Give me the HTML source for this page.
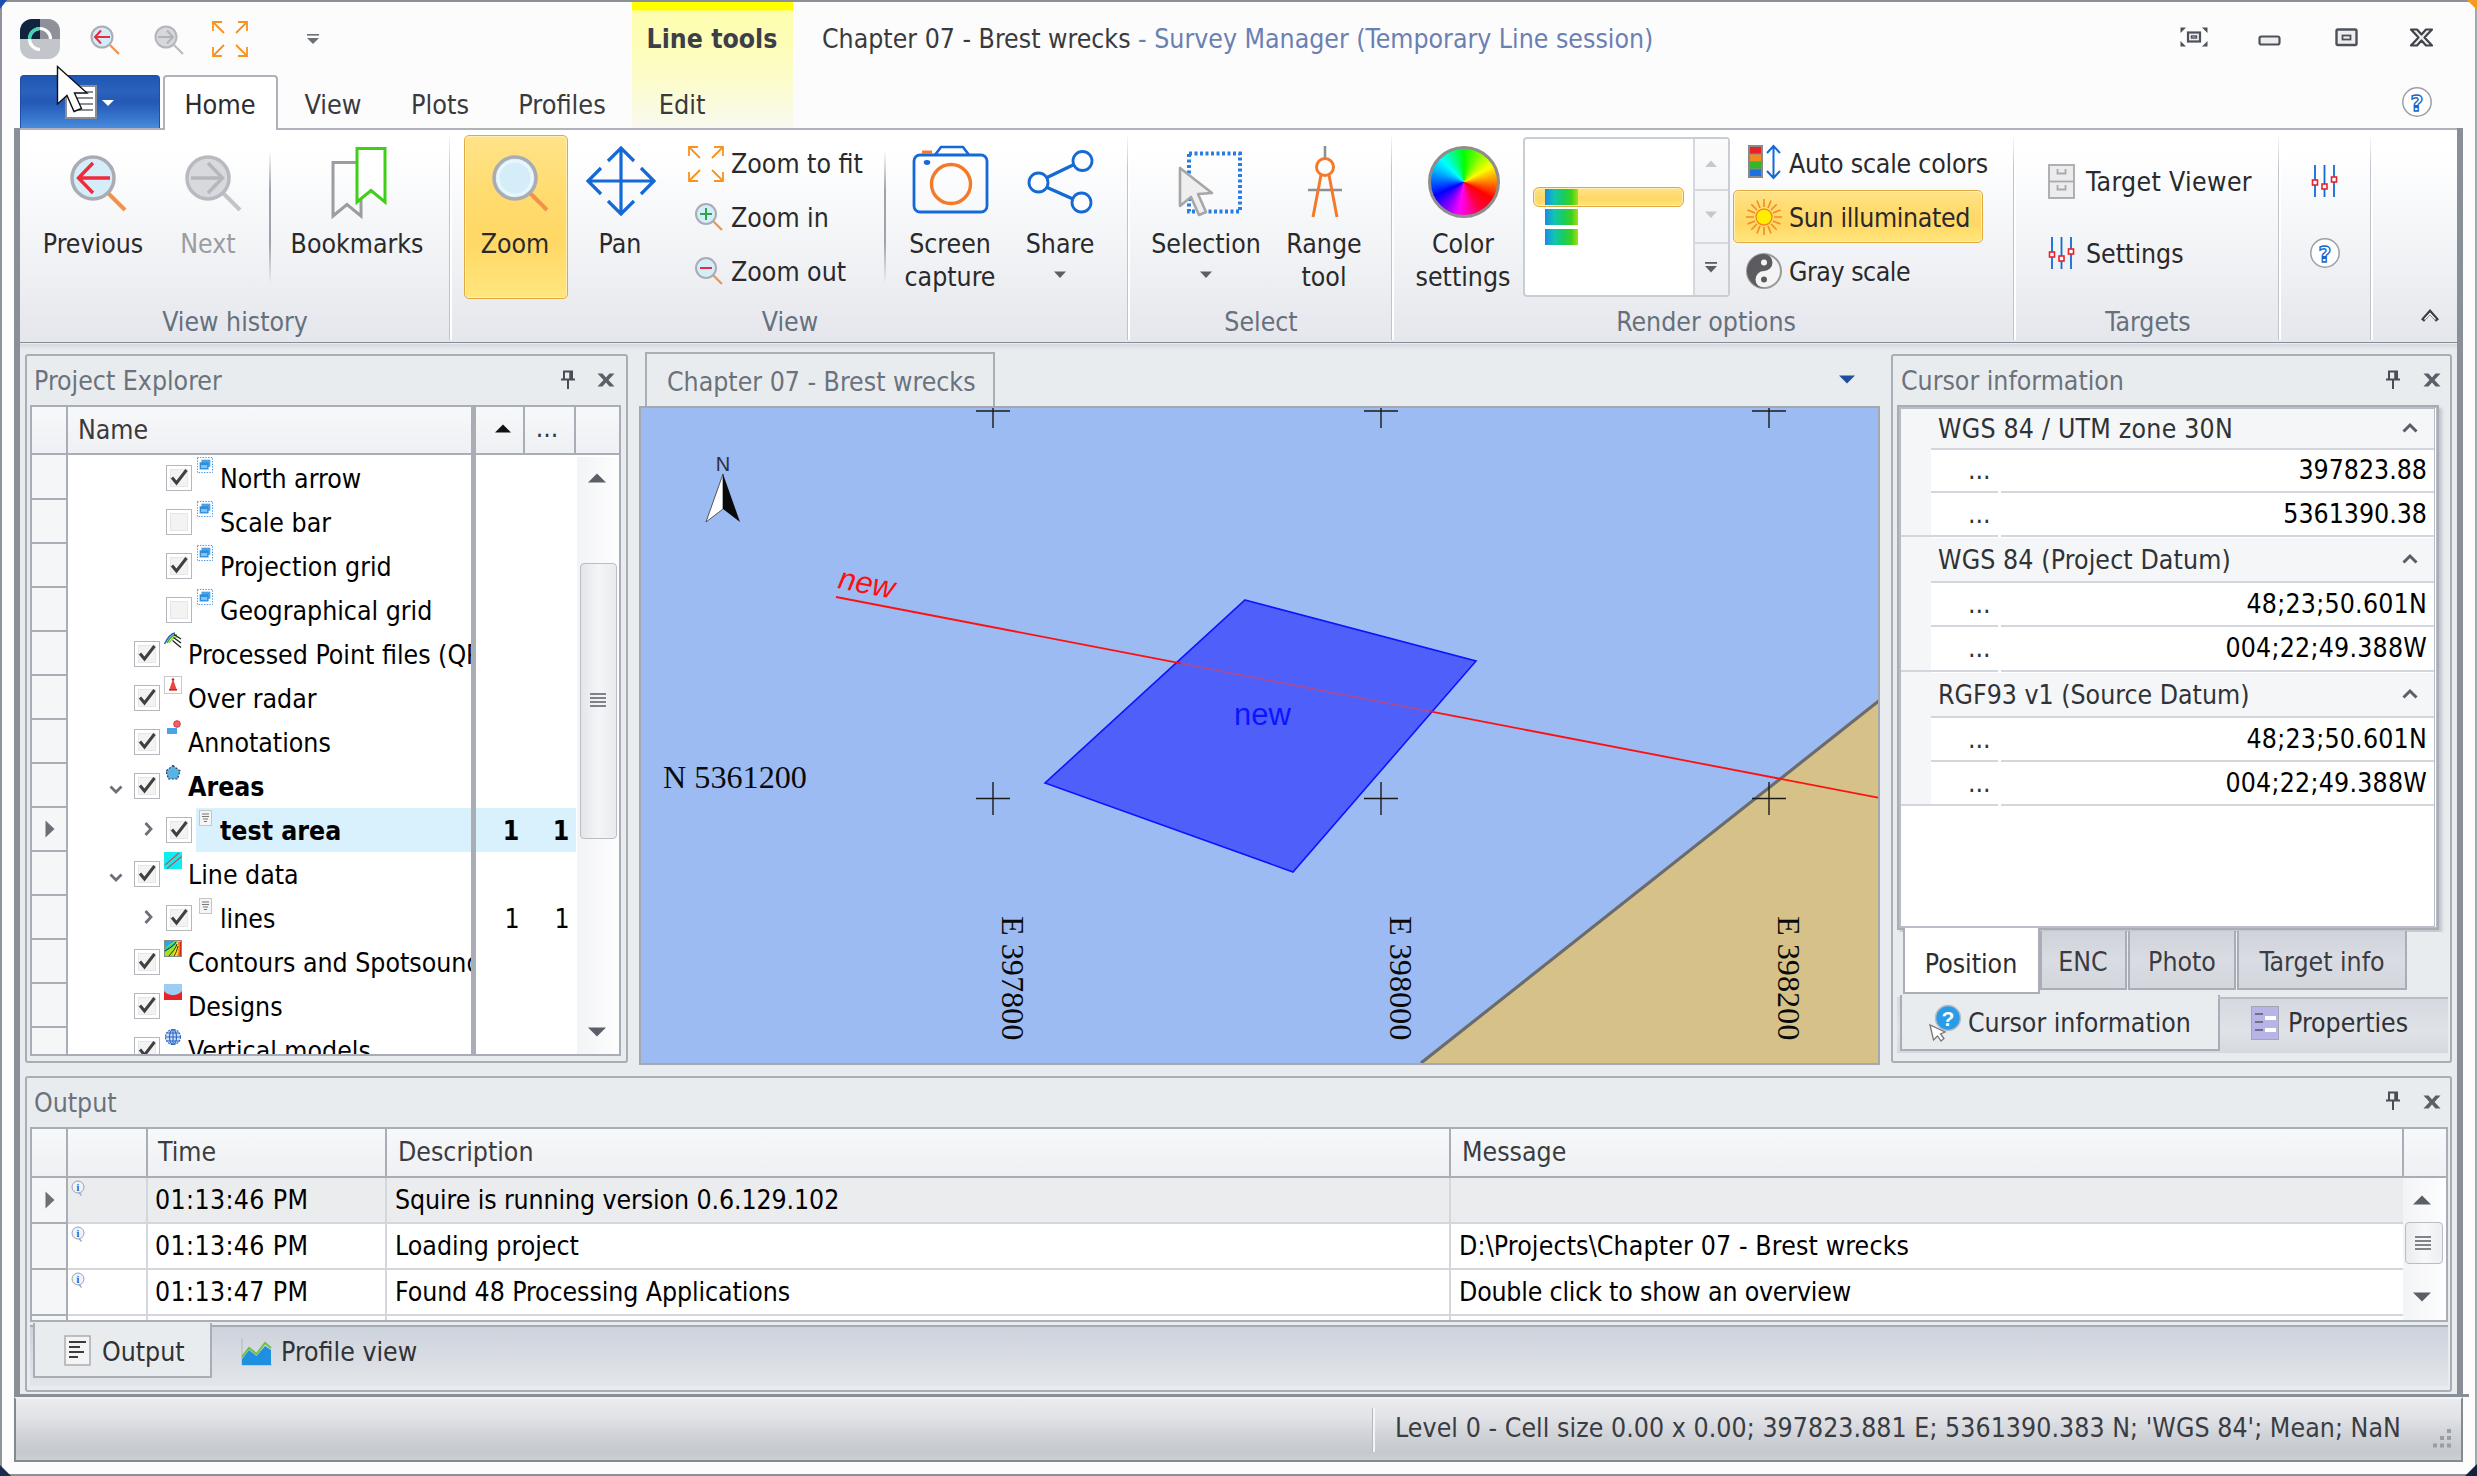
<!DOCTYPE html>
<html><head><meta charset="utf-8"><title>Survey Manager</title>
<style>
*{box-sizing:border-box;margin:0;padding:0}
html,body{width:2477px;height:1476px;overflow:hidden;background:#f8f9fb}
body{font-family:"DejaVu Sans Condensed","Liberation Sans",sans-serif;font-size:26.45px;color:#29292b;position:relative;letter-spacing:0px}
.a{position:absolute}
.t{position:absolute;white-space:nowrap;line-height:32px;height:32px;margin-top:1px}
.c{transform:translateX(-50%);text-align:center}
.r{transform:translateX(-100%);text-align:right}
.g{color:#66707c}
svg{position:absolute;overflow:visible}
.cb{position:absolute;width:26px;height:26px;border:1.5px solid #b4b8be;background:#f3f3f3;box-shadow:inset 0 0 0 3px #fff, inset 0 0 0 4px #e6e6e6}
.hl{background:linear-gradient(#ffe389,#ffdc70 35%,#ffd865 65%,#ffe67e 100%);border:1.5px solid #e2a83c;border-radius:5px;box-shadow:inset 0 0 0 1px #fff0b8}
.sep{position:absolute;width:2px;background:linear-gradient(rgba(150,155,165,0),#9fa3ab 30%,#9fa3ab 70%,rgba(150,155,165,0))}
.gsep{position:absolute;width:3px;top:132px;height:208px;background:linear-gradient(90deg,#bfc3cb 0 1.5px,#fff 1.5px 3px);-webkit-mask-image:linear-gradient(transparent,#000 18%,#000 100%);mask-image:linear-gradient(transparent,#000 18%,#000 100%)}
</style></head><body>
<!-- window frame -->
<div class="a" style="left:0;top:0;width:2477px;height:1476px;background:#fcfcfd"></div>
<div class="a" style="left:0;top:0;width:2477px;height:2px;background:#8c9198"></div>
<div class="a" style="left:0;top:0;width:2px;height:1476px;background:#8f949c"></div>
<div class="a" style="left:2475px;top:0;width:2px;height:1476px;background:#a3a8b0"></div>
<!-- TITLE BAR -->
<div class="a" style="left:632px;top:2px;width:161px;height:126px;background:linear-gradient(#ffff00 0,#ffff00 8px,#fefeae 9px,#fdfdba 45px,#fcfcd0 85px,#fafae6 112px,#f9f9f0 126px)"></div>
<div class="t c" style="left:712px;top:22px;font-weight:bold;color:#3c3f4a;font-size:26.4px">Line tools</div>
<div class="t" style="left:822px;top:22px;color:#3a3a3c">Chapter 07 - Brest wrecks<span style="color:#6a80b2"> - Survey Manager (Temporary Line session)</span></div>
<!-- app icon -->
<svg style="left:20px;top:19px" width="40" height="40" viewBox="0 0 40 40">
<defs><clipPath id="ai"><rect x="0" y="0" width="40" height="40" rx="12"/></clipPath></defs>
<g clip-path="url(#ai)"><rect width="40" height="40" fill="#c2c5ca"/><rect width="20" height="20" fill="#10243f"/><rect x="20" width="20" height="20" fill="#8e9197"/></g>
<path d="M20 9.500000000000002A10.5 10.5 0 1 0 20 30.5" fill="none" stroke="#fff" stroke-width="3.2"/>
<path d="M20 9.5A10.5 10.5 0 0 1 30.5 20" fill="none" stroke="#fff" stroke-width="3.2"/>
<path d="M9.5 20A10.5 10.5 0 0 1 20 9.5" fill="none" stroke="#3fd6b0" stroke-width="3.2"/>
</svg>
<!-- zoom back -->
<svg style="left:86px;top:21px" width="36" height="36" viewBox="0 0 36 36">
<line x1="24" y1="24" x2="33" y2="33" stroke="#f0914a" stroke-width="2.2"/>
<circle cx="16" cy="16" r="10.5" fill="#d2ecf9" stroke="#a9adb3" stroke-width="2"/>
<path d="M24 16H9M15 9.500000000000002L9 16L15 22.5" fill="none" stroke="#ee2b3b" stroke-width="2"/>
</svg>
<!-- zoom fwd disabled -->
<svg style="left:150px;top:21px" width="36" height="36" viewBox="0 0 36 36">
<line x1="24" y1="24" x2="33" y2="33" stroke="#b9bcc1" stroke-width="2.2"/>
<circle cx="16" cy="16" r="10.5" fill="#d6d8db" stroke="#b3b6bb" stroke-width="2"/>
<path d="M8 16H23M17 9.500000000000002L23 16L17 22.5" fill="none" stroke="#b0b3b8" stroke-width="2"/>
</svg>
<!-- zoom to fit -->
<svg style="left:212px;top:21px" width="36" height="36" viewBox="0 0 36 36" fill="none" stroke="#f7931e" stroke-width="1.8">
<path d="M12 12L1 1M1 10V1H10M24 12L35 1M26 1H35V10M12 24L1 35M1 26V35H10M24 24L35 35M26 35H35V26"/>
</svg>
<!-- qat dropdown -->
<svg style="left:306px;top:34px" width="14" height="12" viewBox="0 0 14 12"><rect x="1" y="0" width="12" height="1.6" fill="#6b6f77"/><path d="M1 4H13L7 10Z" fill="#6b6f77"/></svg>
<!-- window buttons -->
<svg style="left:2180px;top:27px" width="28" height="20" viewBox="0 0 28 20">
<path d="M0.5 0.5H6L0.5 6ZM27.5 0.5H22L27.5 6ZM0.5 19.500000000000004H6L0.5 14ZM27.5 19.500000000000004H22L27.5 14Z" fill="#4d515a"/>
<rect x="8" y="5.500000000000001" width="12" height="9" fill="#eeeef0" stroke="#4d515a" stroke-width="2.2"/><rect x="11.5" y="9" width="5" height="2" fill="none" stroke="#4d515a" stroke-width="1.4"/></svg>
<svg style="left:2258px;top:35px" width="24" height="12" viewBox="0 0 24 12"><rect x="1.5" y="1.5" width="20" height="8" rx="2" fill="#eeeef0" stroke="#4d515a" stroke-width="2.2"/></svg>
<svg style="left:2335px;top:28px" width="24" height="20" viewBox="0 0 24 20" fill="none" stroke="#4d515a"><rect x="1.5" y="1.5" width="20" height="15.500000000000002" rx="1.5" stroke-width="2.4" fill="#eeeef0"/><rect x="7.5" y="7.5" width="8" height="4" stroke-width="1.8"/></svg>
<svg style="left:2409px;top:28px" width="26" height="20" viewBox="0 0 26 20"><path d="M2 1.5H8L12.5 6.5L17 1.5H23L15.500000000000002 9.5L23 17.5H17L12.5 12.5L8 17.5H2L9.500000000000002 9.5Z" fill="#eeeef0" stroke="#3f434b" stroke-width="2.2" stroke-linejoin="round"/></svg>
<!-- TAB ROW -->
<div class="a" style="left:20px;top:75px;width:140px;height:53px;border-radius:4px 4px 0 0;background:linear-gradient(#1e56b3 0,#2a62bd 30%,#2458b6 50%,#3a7ad0 85%,#4a8cdc 100%);border:1.5px solid #1c4fa8;border-bottom:none"></div>
<svg style="left:64px;top:84px" width="52" height="36" viewBox="0 0 52 36">
<rect x="2" y="2" width="30" height="32" fill="#fff" stroke="#8a8d92" stroke-width="2"/>
<path d="M13 8H29M13 14H29M13 20H29M13 26H29" stroke="#8a8d92" stroke-width="2.2"/><rect x="4" y="4" width="6" height="28" fill="#fff"/>
<path d="M38 16H50L44 22Z" fill="#fff"/></svg>
<div class="a" style="left:163px;top:75px;width:115px;height:55px;border:2px solid #aeb3bb;border-bottom:none;border-radius:4px 4px 0 0;background:#fff"></div>
<div class="t c" style="left:220px;top:88px;color:#2c2c2e;font-size:26.8px">Home</div>
<div class="t c" style="left:333px;top:88px;color:#3a3a3c;font-size:26.8px">View</div>
<div class="t c" style="left:440px;top:88px;color:#3a3a3c;font-size:26.8px">Plots</div>
<div class="t c" style="left:562px;top:88px;color:#3a3a3c;font-size:26.8px">Profiles</div>
<div class="t c" style="left:682px;top:88px;color:#3a3a3c;font-size:26.8px">Edit</div>
<svg style="left:2401px;top:86px" width="32" height="32" viewBox="0 0 32 32"><circle cx="16" cy="16" r="14.2" fill="#fff" stroke="#9b9fa6" stroke-width="1.5"/><text x="16" y="24.5" text-anchor="middle" font-family="DejaVu Sans,Liberation Sans,sans-serif" font-size="22" font-weight="bold" fill="#fff" stroke="#1c64c8" stroke-width="1.4">?</text></svg>
<!-- RIBBON -->
<div class="a" style="left:14px;top:128px;width:2449px;height:216px;background:#8a8f97"></div>
<div class="a" style="left:20px;top:128px;width:2437px;height:216px;background:linear-gradient(#ffffff 0,#ffffff 10%,#f7f8fa 38%,#eef0f3 68%,#e7e9ee 90%,#e5e7ec 100%);border-top:2px solid #aeb3bb;border-bottom:2px solid #878d96"></div>
<div class="a" style="left:165px;top:128px;width:111px;height:3px;background:#fff"></div>
<div class="gsep" style="left:449px"></div><div class="gsep" style="left:1127px"></div><div class="gsep" style="left:1391px"></div><div class="gsep" style="left:2013px"></div><div class="gsep" style="left:2278px"></div><div class="gsep" style="left:2370px"></div>
<div class="t c g" style="left:235px;top:305px">View history</div>
<div class="t c g" style="left:790px;top:305px">View</div>
<div class="t c g" style="left:1261px;top:305px">Select</div>
<div class="t c g" style="left:1706px;top:305px">Render options</div>
<div class="t c g" style="left:2148px;top:305px">Targets</div>
<!-- Previous -->
<svg style="left:63px;top:148px" width="70" height="70" viewBox="0 0 70 70">
<line x1="45" y1="45" x2="62" y2="62" stroke="#f2924c" stroke-width="4"/>
<circle cx="30" cy="30" r="21" fill="#d4edf9" stroke="#a9adb3" stroke-width="3.5"/>
<path d="M47 30H16M30 15L15.500000000000002 30L30 45" fill="none" stroke="#ee2b3b" stroke-width="3.4"/>
</svg>
<div class="t c" style="left:93px;top:227px">Previous</div>
<!-- Next -->
<svg style="left:178px;top:148px" width="70" height="70" viewBox="0 0 70 70">
<line x1="45" y1="45" x2="62" y2="62" stroke="#c1c4c9" stroke-width="4"/>
<circle cx="30" cy="30" r="21" fill="#d7d9dc" stroke="#b7babf" stroke-width="3.5"/>
<path d="M13 30H44M30 15L44.5 30L30 45" fill="none" stroke="#b4b7bc" stroke-width="3.4"/>
</svg>
<div class="t c" style="left:208px;top:227px;color:#9b9da1">Next</div>
<div class="sep" style="left:269px;top:150px;height:134px"></div>
<!-- Bookmarks -->
<svg style="left:330px;top:146px" width="60" height="74" viewBox="0 0 60 74" fill="none">
<path d="M3 16.5H31V70L17 58.5L3 70Z" stroke="#9a9da2" stroke-width="3"/>
<path d="M27 2.5H55V56L41 44.5L27 56Z" fill="#fff" stroke="#3fcf19" stroke-width="3"/>
</svg>
<div class="t c" style="left:357px;top:227px">Bookmarks</div>
<!-- Zoom -->
<div class="a hl" style="left:464px;top:135px;width:104px;height:164px"></div>
<svg style="left:485px;top:148px" width="70" height="70" viewBox="0 0 70 70">
<line x1="45" y1="45" x2="62" y2="62" stroke="#f2924c" stroke-width="4"/>
<circle cx="30" cy="30" r="21" fill="#d4edf9" stroke="#a9adb3" stroke-width="3.5"/>
<circle cx="30" cy="30" r="17" fill="none" stroke="#e9f6fc" stroke-width="3"/>
</svg>
<div class="t c" style="left:515px;top:227px">Zoom</div>
<!-- Pan -->
<svg style="left:586px;top:146px" width="70" height="70" viewBox="0 0 70 70" fill="none" stroke="#1469d6" stroke-width="3.2">
<path d="M35 2V68M2 35H68M22 15L35 2L48 15M22 55L35 68L48 55M15 22L2 35L15 48M55 22L68 35L55 48"/>
</svg>
<div class="t c" style="left:620px;top:227px">Pan</div>
<!-- small zoom buttons -->
<svg style="left:688px;top:146px" width="36" height="36" viewBox="0 0 36 36" fill="none" stroke="#f7931e" stroke-width="1.8">
<path d="M12 12L1 1M1 10V1H10M24 12L35 1M26 1H35V10M12 24L1 35M1 26V35H10M24 24L35 35M26 35H35V26"/></svg>
<div class="t" style="left:731px;top:147px">Zoom to fit</div>
<svg style="left:694px;top:202px" width="30" height="30" viewBox="0 0 30 30">
<line x1="19" y1="19" x2="28" y2="28" stroke="#f2924c" stroke-width="2.2"/>
<circle cx="12" cy="12" r="10" fill="#d4edf9" stroke="#a9adb3" stroke-width="2"/>
<path d="M6 12H18M12 6V18" stroke="#2ca84a" stroke-width="2"/></svg>
<div class="t" style="left:731px;top:201px">Zoom in</div>
<svg style="left:694px;top:256px" width="30" height="30" viewBox="0 0 30 30">
<line x1="19" y1="19" x2="28" y2="28" stroke="#f2924c" stroke-width="2.2"/>
<circle cx="12" cy="12" r="10" fill="#d4edf9" stroke="#a9adb3" stroke-width="2"/>
<path d="M6 12H18" stroke="#ee2b3b" stroke-width="2"/></svg>
<div class="t" style="left:731px;top:255px">Zoom out</div>
<div class="sep" style="left:884px;top:150px;height:134px"></div>
<!-- Screen capture -->
<svg style="left:912px;top:144px" width="78" height="72" viewBox="0 0 78 72" fill="none">
<path d="M23 11L29 3H51L57 11" stroke="#1469d6" stroke-width="2.6"/>
<rect x="2" y="11" width="73" height="57" rx="6" stroke="#1469d6" stroke-width="2.8"/>
<rect x="10" y="6.5" width="10" height="3.5" fill="#f47a2a"/>
<ellipse cx="15" cy="18.5" rx="3.2" ry="2.4" fill="#1469d6"/>
<circle cx="39" cy="40" r="19.5" stroke="#f47a2a" stroke-width="3.4"/>
</svg>
<div class="t c" style="left:950px;top:227px">Screen</div><div class="t c" style="left:950px;top:260px">capture</div>
<!-- Share -->
<svg style="left:1026px;top:148px" width="70" height="68" viewBox="0 0 70 68" fill="none" stroke="#1469d6" stroke-width="2.8">
<path d="M20 30L47 17M20 39L47 51" stroke-width="3.4"/>
<circle cx="12.5" cy="34.5" r="9.5" fill="#fff"/><circle cx="56.5" cy="13" r="9.5" fill="#fff"/><circle cx="55.5" cy="54.5" r="9.5" fill="#fff"/>
</svg>
<div class="t c" style="left:1060px;top:227px">Share</div>
<svg style="left:1054px;top:271px" width="12" height="8" viewBox="0 0 12 8"><path d="M0 0.5H12L6 7Z" fill="#5a5e66"/></svg>
<!-- Selection -->
<svg style="left:1174px;top:148px" width="72" height="72" viewBox="0 0 72 72" fill="none">
<rect x="15" y="5.500000000000001" width="51" height="58" stroke="#2a7de0" stroke-width="4" stroke-dasharray="3 2.5"/>
<path d="M6 20L6 58L17 49L25 67L32 64L24 46L38 45Z" fill="#eeeeee" stroke="#a6a6a6" stroke-width="2.6" stroke-linejoin="round"/>
</svg>
<div class="t c" style="left:1206px;top:227px">Selection</div>
<svg style="left:1200px;top:271px" width="12" height="8" viewBox="0 0 12 8"><path d="M0 0.5H12L6 7Z" fill="#5a5e66"/></svg>
<!-- Range tool -->
<svg style="left:1304px;top:144px" width="42" height="76" viewBox="0 0 42 76" fill="none">
<path d="M21 2V15" stroke="#8c8f94" stroke-width="2.6"/>
<path d="M4 46H38" stroke="#8c8f94" stroke-width="2.6"/>
<circle cx="21" cy="23" r="8.5" stroke="#f47a2a" stroke-width="3"/>
<path d="M17 31L9 73M25 31L33 73" stroke="#f47a2a" stroke-width="3"/>
</svg>
<div class="t c" style="left:1324px;top:227px">Range</div><div class="t c" style="left:1324px;top:260px">tool</div>
<!-- Color settings -->
<div class="a" style="left:1428px;top:146px;width:72px;height:72px;border-radius:50%;border:3.5px solid #8d8d8d;background:conic-gradient(from 0deg,#00ff00 0deg,#80ff00 30deg,#ffff00 60deg,#ff8000 90deg,#ff0000 120deg,#ff0040 150deg,#ff00c0 175deg,#ff00ff 190deg,#8000ff 215deg,#0000ff 245deg,#0060ff 270deg,#00c0ff 295deg,#00ffff 315deg,#00ff80 340deg,#00ff00 360deg)"></div>
<div class="t c" style="left:1463px;top:227px">Color</div><div class="t c" style="left:1463px;top:260px">settings</div>
<!-- gallery -->
<div class="a" style="left:1523px;top:137px;width:207px;height:160px;background:#fff;border:2px solid #c9cdd4;border-radius:4px"></div>
<div class="a" style="left:1693px;top:139px;width:35px;height:156px;border-left:2px solid #d5d8de;background:linear-gradient(#fbfbfc,#eceef2)"></div>
<div class="a" style="left:1693px;top:189px;width:35px;height:2px;background:#d5d8de"></div>
<div class="a" style="left:1693px;top:242px;width:35px;height:2px;background:#d5d8de"></div>
<svg style="left:1705px;top:160px" width="12" height="8" viewBox="0 0 12 8"><path d="M0 7H12L6 0.5Z" fill="#c5c8ce"/></svg>
<svg style="left:1705px;top:211px" width="12" height="8" viewBox="0 0 12 8"><path d="M0 0.5H12L6 7Z" fill="#c5c8ce"/></svg>
<svg style="left:1705px;top:262px" width="12" height="12" viewBox="0 0 12 12"><rect x="0" y="0" width="12" height="1.8" fill="#5a5e66"/><path d="M0 4H12L6 10.5Z" fill="#5a5e66"/></svg>
<div class="a hl" style="left:1533px;top:187px;width:151px;height:20px;border-radius:6px"></div>
<div class="a" style="left:1545px;top:189px;width:33px;height:16px;background:linear-gradient(90deg,#1a8ae6,#12c4b4 28%,#18cc60 55%,#3cd020 80%,#a4e010)"></div>
<div class="a" style="left:1545px;top:209px;width:33px;height:16px;background:linear-gradient(90deg,#1a8ae6,#12c4b4 28%,#18cc60 55%,#3cd020 80%,#a4e010)"></div>
<div class="a" style="left:1545px;top:229px;width:33px;height:16px;background:linear-gradient(90deg,#1a8ae6,#12c4b4 28%,#18cc60 55%,#3cd020 80%,#a4e010)"></div>
<!-- auto scale colors -->
<svg style="left:1748px;top:144px" width="36" height="36" viewBox="0 0 36 36">
<rect x="0" y="1" width="15" height="33" fill="#8a8a8a"/>
<rect x="2" y="3" width="11" height="6.5" fill="#e8212b"/><rect x="2" y="10.5" width="11" height="6.5" fill="#f28a1e"/><rect x="2" y="18" width="11" height="6.5" fill="#35b52b"/><rect x="2" y="25.500000000000004" width="11" height="6.5" fill="#1f6fdc"/>
<path d="M25.500000000000004 2V34M19 9L25.500000000000004 2L32 9M19 27L25.500000000000004 34L32 27" fill="none" stroke="#1469d6" stroke-width="2"/></svg>
<div class="t" style="left:1789px;top:147px;letter-spacing:-0.21px">Auto scale colors</div>
<div class="a hl" style="left:1733px;top:190px;width:250px;height:53px"></div>
<svg style="left:1746px;top:199px" width="36" height="36" viewBox="0 0 36 36">
<g stroke="#f58a1f" stroke-width="1.6"><path d="M18 0V8M18 28V36M0 18H8M28 18H36M5.300000000000001 5.300000000000001L11 11M25 25L30.7 30.7M30.7 5.300000000000001L25 11M5.300000000000001 30.7L11 25M11 1.5L14 9M25 1.5L22 9M11 34.5L14 27M25 34.5L22 27M1.5 11L9 14M1.5 25L9 22M34.5 11L27 14M34.5 25L27 22"/></g>
<circle cx="18" cy="18" r="8" fill="#ffee00" stroke="#f58a1f" stroke-width="1.4"/></svg>
<div class="t" style="left:1789px;top:201px;letter-spacing:-0.35px">Sun illuminated</div>
<svg style="left:1746px;top:253px" width="36" height="36" viewBox="0 0 36 36">
<circle cx="18" cy="18" r="17" fill="#f4f4f4" stroke="#9a9a9a" stroke-width="2"/>
<path d="M18 1A17 17 0 0 0 18 35A8.5 8.5 0 0 1 18 18A8.5 8.5 0 0 0 18 1Z" fill="#5c5c60"/>
<circle cx="18" cy="9.5" r="3" fill="#f4f4f4"/><circle cx="18" cy="26.5" r="3" fill="#5c5c60"/></svg>
<div class="t" style="left:1789px;top:255px;letter-spacing:-0.45px">Gray scale</div>
<!-- targets -->
<svg style="left:2048px;top:164px" width="28" height="36" viewBox="0 0 28 36" fill="#ececec" stroke="#a7a9ad" stroke-width="1.8">
<rect x="1" y="1" width="25" height="33"/><path d="M1 17.5H26" /><path d="M9.5 5V9.500000000000002H17.5V5M9.5 21V25.500000000000004H17.5V21" fill="none"/></svg>
<div class="t" style="left:2086px;top:165px;letter-spacing:0.35px">Target Viewer</div>
<svg style="left:2048px;top:236px" width="28" height="34" viewBox="0 0 28 34" fill="none">
<path d="M4 1V33M13.5 1V33M23 1V33" stroke="#1469d6" stroke-width="1.8"/>
<rect x="1.5" y="16" width="5" height="5" fill="#fff" stroke="#e8212b" stroke-width="1.6"/><rect x="11" y="20" width="5" height="5" fill="#fff" stroke="#e8212b" stroke-width="1.6"/><rect x="20.5" y="13" width="5" height="5" fill="#fff" stroke="#e8212b" stroke-width="1.6"/></svg>
<div class="t" style="left:2086px;top:237px">Settings</div>
<svg style="left:2311px;top:164px" width="28" height="34" viewBox="0 0 28 34" fill="none">
<path d="M4 1V33M13.5 1V33M23 1V33" stroke="#1469d6" stroke-width="1.8"/>
<rect x="1.5" y="16" width="5" height="5" fill="#fff" stroke="#e8212b" stroke-width="1.6"/><rect x="11" y="20" width="5" height="5" fill="#fff" stroke="#e8212b" stroke-width="1.6"/><rect x="20.5" y="13" width="5" height="5" fill="#fff" stroke="#e8212b" stroke-width="1.6"/></svg>
<svg style="left:2309px;top:237px" width="32" height="32" viewBox="0 0 32 32"><circle cx="16" cy="16" r="14.2" fill="#fff" stroke="#9b9fa6" stroke-width="1.5"/><text x="16" y="24.5" text-anchor="middle" font-family="DejaVu Sans,Liberation Sans,sans-serif" font-size="22" font-weight="bold" fill="#fff" stroke="#1c64c8" stroke-width="1.4">?</text></svg>
<svg style="left:2421px;top:309px" width="18" height="14" viewBox="0 0 18 14"><path d="M1.5 11.5L9 3L16.5 11.5" fill="none" stroke="#3c3f46" stroke-width="4" stroke-linejoin="miter"/><path d="M3.5 10.5L9 4.5L14.5 10.5" fill="none" stroke="#fff" stroke-width="1.2"/></svg>
<!-- PANELS BG -->
<div class="a" style="left:20px;top:343px;width:2437px;height:1054px;background:#e9ecef"></div>
<div class="a" style="left:14px;top:343px;width:6px;height:1052px;background:#8a8f97"></div>
<div class="a" style="left:2457px;top:343px;width:6px;height:1052px;background:#8a8f97"></div>
<div class="a" style="left:20px;top:344px;width:2437px;height:6px;background:linear-gradient(#d6d9de,#e9ecef)"></div>
<!-- PROJECT EXPLORER -->
<div class="a" style="left:25px;top:354px;width:603px;height:709px;border:2px solid #a9aeb6;border-radius:3px;background:#e9ecef"></div>
<div class="t" style="left:34px;top:364px;color:#6b727c">Project Explorer</div>
<svg style="left:560px;top:370px" width="16" height="20" viewBox="0 0 16 20"><path d="M4 1.5H12V9.5H4ZM1 9.5H15M8 9.5V19" fill="none" stroke="#4a4d55" stroke-width="2"/><path d="M10.5 2V9" stroke="#4a4d55" stroke-width="2.5"/></svg>
<svg style="left:596px;top:372px" width="20" height="16" viewBox="0 0 20 16"><path d="M1.5 1.5H6.5L10 5.5L13.5 1.5H18.5L12.5 8L18.5 14.5H13.5L10 10.5L6.5 14.5H1.5L7.5 8Z" fill="#5c5f68"/></svg>
<div class="a" style="left:30px;top:405px;width:591px;height:651px;background:#fff;border:2px solid #a9aeb6"></div>
<div class="a" style="left:32px;top:407px;width:587px;height:48px;background:linear-gradient(#f7f8fa,#eef0f3);border-bottom:2px solid #a9aeb6"></div>
<div class="a" style="left:32px;top:455px;width:34px;height:599px;background:#f5f6f8"></div>
<div class="a" style="left:66px;top:407px;width:2px;height:647px;background:#a9aeb6"></div>
<div class="a" style="left:471px;top:407px;width:5px;height:647px;background:#a9aeb6"></div>
<div class="a" style="left:523px;top:407px;width:2px;height:47px;background:#a9aeb6"></div>
<div class="a" style="left:574px;top:407px;width:2px;height:47px;background:#a9aeb6"></div>
<div class="t" style="left:78px;top:413px;color:#3a3a3c">Name</div>
<svg style="left:495px;top:424px" width="16" height="9" viewBox="0 0 16 9"><path d="M0 8.5H16L8 0.5Z" fill="#111"/></svg>
<div class="t c" style="left:547px;top:411px;color:#3a3a3c">...</div>
<div class="a" style="left:32px;top:498px;width:34px;height:2px;background:#a9aeb6"></div>
<div class="a" style="left:32px;top:542px;width:34px;height:2px;background:#a9aeb6"></div>
<div class="a" style="left:32px;top:586px;width:34px;height:2px;background:#a9aeb6"></div>
<div class="a" style="left:32px;top:630px;width:34px;height:2px;background:#a9aeb6"></div>
<div class="a" style="left:32px;top:674px;width:34px;height:2px;background:#a9aeb6"></div>
<div class="a" style="left:32px;top:718px;width:34px;height:2px;background:#a9aeb6"></div>
<div class="a" style="left:32px;top:762px;width:34px;height:2px;background:#a9aeb6"></div>
<div class="a" style="left:32px;top:806px;width:34px;height:2px;background:#a9aeb6"></div>
<div class="a" style="left:32px;top:850px;width:34px;height:2px;background:#a9aeb6"></div>
<div class="a" style="left:32px;top:894px;width:34px;height:2px;background:#a9aeb6"></div>
<div class="a" style="left:32px;top:938px;width:34px;height:2px;background:#a9aeb6"></div>
<div class="a" style="left:32px;top:982px;width:34px;height:2px;background:#a9aeb6"></div>
<div class="a" style="left:32px;top:1026px;width:34px;height:2px;background:#a9aeb6"></div>
<div class="a" style="left:577px;top:457px;width:42px;height:597px;background:linear-gradient(90deg,#f3f4f6,#fdfdfe)"></div>
<svg style="left:588px;top:473px" width="18" height="10" viewBox="0 0 18 10"><path d="M0 9.500000000000002H18L9 0.5Z" fill="#5a5e66"/></svg>
<svg style="left:588px;top:1027px" width="18" height="10" viewBox="0 0 18 10"><path d="M0 0.5H18L9 9.500000000000002Z" fill="#5a5e66"/></svg>
<div class="a" style="left:580px;top:563px;width:37px;height:276px;border:1.5px solid #b9bdc5;border-radius:4px;background:linear-gradient(90deg,#e3e5e9,#f4f5f7 50%,#e9ebee)"></div>
<svg style="left:590px;top:693px" width="16" height="14" viewBox="0 0 16 14"><path d="M0 1H16M0 5H16M0 9H16M0 13H16" stroke="#5a5e66" stroke-width="1.6"/></svg>
<div class="a" style="left:67px;top:457px;width:404px;height:597px;overflow:hidden">
<div class="a" style="left:-67px;top:-457px;width:0;height:0"><div class="cb" style="left:166px;top:465px"></div><svg style="left:168px;top:467px" width="22" height="20" viewBox="0 0 22 20"><path d="M4 10.5L8.5 16L18.5 3" fill="none" stroke="#404040" stroke-width="3"/></svg><svg style="left:197px;top:457px" width="16" height="16" viewBox="0 0 18 18"><rect x="0.5" y="0.5" width="17" height="17" fill="#fff" stroke="#3a8ee0" stroke-width="1.1" stroke-dasharray="1.5 1.5"/><rect x="5" y="3" width="10" height="8" fill="#4aa3e8"/><rect x="3" y="6" width="10" height="8" fill="#2f8ddb"/><rect x="4.5" y="9" width="7" height="3.5" fill="#7cc4f2"/></svg><div class="t" style="left:220px;top:462px;color:#000;">North arrow</div><div class="cb" style="left:166px;top:509px"></div><svg style="left:197px;top:501px" width="16" height="16" viewBox="0 0 18 18"><rect x="0.5" y="0.5" width="17" height="17" fill="#fff" stroke="#3a8ee0" stroke-width="1.1" stroke-dasharray="1.5 1.5"/><rect x="5" y="3" width="10" height="8" fill="#4aa3e8"/><rect x="3" y="6" width="10" height="8" fill="#2f8ddb"/><rect x="4.5" y="9" width="7" height="3.5" fill="#7cc4f2"/></svg><div class="t" style="left:220px;top:506px;color:#000;">Scale bar</div><div class="cb" style="left:166px;top:553px"></div><svg style="left:168px;top:555px" width="22" height="20" viewBox="0 0 22 20"><path d="M4 10.5L8.5 16L18.5 3" fill="none" stroke="#404040" stroke-width="3"/></svg><svg style="left:197px;top:545px" width="16" height="16" viewBox="0 0 18 18"><rect x="0.5" y="0.5" width="17" height="17" fill="#fff" stroke="#3a8ee0" stroke-width="1.1" stroke-dasharray="1.5 1.5"/><rect x="5" y="3" width="10" height="8" fill="#4aa3e8"/><rect x="3" y="6" width="10" height="8" fill="#2f8ddb"/><rect x="4.5" y="9" width="7" height="3.5" fill="#7cc4f2"/></svg><div class="t" style="left:220px;top:550px;color:#000;">Projection grid</div><div class="cb" style="left:166px;top:597px"></div><svg style="left:197px;top:589px" width="16" height="16" viewBox="0 0 18 18"><rect x="0.5" y="0.5" width="17" height="17" fill="#fff" stroke="#3a8ee0" stroke-width="1.1" stroke-dasharray="1.5 1.5"/><rect x="5" y="3" width="10" height="8" fill="#4aa3e8"/><rect x="3" y="6" width="10" height="8" fill="#2f8ddb"/><rect x="4.5" y="9" width="7" height="3.5" fill="#7cc4f2"/></svg><div class="t" style="left:220px;top:594px;color:#000;">Geographical grid</div><div class="cb" style="left:134px;top:641px"></div><svg style="left:136px;top:643px" width="22" height="20" viewBox="0 0 22 20"><path d="M4 10.5L8.5 16L18.5 3" fill="none" stroke="#404040" stroke-width="3"/></svg><svg style="left:164px;top:632px" width="18" height="18" viewBox="0 0 18 18" fill="none"><path d="M0.5 12C4 5 8 1.5 11 1" stroke="#2b59c8" stroke-width="1.5"/><path d="M3 11C6 5 10 2.5 13 3" stroke="#35a83a" stroke-width="1.5"/><path d="M5 11C8 6 11 4 14 5" stroke="#9ad21c" stroke-width="1.4"/><path d="M10 2.5L17 7M9.500000000000002 5.500000000000001L17 11M8.5 8.5L17 15.500000000000002" stroke="#222" stroke-width="1.3"/></svg><div class="t" style="left:188px;top:638px;color:#000;">Processed Point files (QPD)</div><div class="cb" style="left:134px;top:685px"></div><svg style="left:136px;top:687px" width="22" height="20" viewBox="0 0 22 20"><path d="M4 10.5L8.5 16L18.5 3" fill="none" stroke="#404040" stroke-width="3"/></svg><svg style="left:164px;top:676px" width="18" height="18" viewBox="0 0 18 18"><rect x="0.5" y="0.5" width="17" height="17" fill="#fff" stroke="#c9c9c9"/><path d="M9 3L12.5 13H5.5Z" fill="#ef4444"/><rect x="5" y="13" width="8" height="1.6" fill="#c22"/><circle cx="9" cy="3.5" r="1.3" fill="#c22"/></svg><div class="t" style="left:188px;top:682px;color:#000;">Over radar</div><div class="cb" style="left:134px;top:729px"></div><svg style="left:136px;top:731px" width="22" height="20" viewBox="0 0 22 20"><path d="M4 10.5L8.5 16L18.5 3" fill="none" stroke="#404040" stroke-width="3"/></svg><svg style="left:164px;top:720px" width="18" height="18" viewBox="0 0 18 18"><rect x="3" y="8" width="10" height="6" fill="#4aa3e8"/><circle cx="13" cy="4" r="3.3" fill="#f06070" stroke="#d33" stroke-width="1"/></svg><div class="t" style="left:188px;top:726px;color:#000;">Annotations</div><svg style="left:109px;top:785px" width="14" height="10" viewBox="0 0 14 10"><path d="M1.5 1.5L7 7L12.5 1.5" fill="none" stroke="#6b6f77" stroke-width="2.8"/></svg><div class="cb" style="left:134px;top:773px"></div><svg style="left:136px;top:775px" width="22" height="20" viewBox="0 0 22 20"><path d="M4 10.5L8.5 16L18.5 3" fill="none" stroke="#404040" stroke-width="3"/></svg><svg style="left:164px;top:764px" width="18" height="18" viewBox="0 0 18 18"><path d="M9 1.5L16 7L13.5 15H4.5L2 7Z" fill="#59b4e6" stroke="#2a3a55" stroke-width="1.2" stroke-dasharray="2 1.5"/></svg><div class="t" style="left:188px;top:770px;color:#000;font-weight:bold;">Areas</div><div class="a" style="left:196px;top:808px;width:300px;height:44px;background:#d9f1fc"></div><svg style="left:144px;top:821px" width="10" height="16" viewBox="0 0 10 16"><path d="M1.5 2L7 8L1.5 14" fill="none" stroke="#6b6f77" stroke-width="2.8"/></svg><div class="cb" style="left:166px;top:817px"></div><svg style="left:168px;top:819px" width="22" height="20" viewBox="0 0 22 20"><path d="M4 10.5L8.5 16L18.5 3" fill="none" stroke="#404040" stroke-width="3"/></svg><svg style="left:199px;top:810px" width="14" height="16" viewBox="0 0 14 16"><rect x="0.5" y="0.5" width="12" height="15" fill="#f4f4f4" stroke="#c6c6c6"/><path d="M3 4H10M3 6.5H10M4 9H9M5 11.5H8" stroke="#777" stroke-width="1.1"/></svg><div class="t" style="left:220px;top:814px;color:#000;font-weight:bold;">test area</div><svg style="left:109px;top:873px" width="14" height="10" viewBox="0 0 14 10"><path d="M1.5 1.5L7 7L12.5 1.5" fill="none" stroke="#6b6f77" stroke-width="2.8"/></svg><div class="cb" style="left:134px;top:861px"></div><svg style="left:136px;top:863px" width="22" height="20" viewBox="0 0 22 20"><path d="M4 10.5L8.5 16L18.5 3" fill="none" stroke="#404040" stroke-width="3"/></svg><svg style="left:164px;top:852px" width="18" height="18" viewBox="0 0 18 18"><rect width="18" height="17" fill="#10ecf2"/><path d="M1 13L15 1M3 16.5L17.5 4.5" stroke="#c85050" stroke-width="1.1"/></svg><div class="t" style="left:188px;top:858px;color:#000;">Line data</div><svg style="left:144px;top:909px" width="10" height="16" viewBox="0 0 10 16"><path d="M1.5 2L7 8L1.5 14" fill="none" stroke="#6b6f77" stroke-width="2.8"/></svg><div class="cb" style="left:166px;top:905px"></div><svg style="left:168px;top:907px" width="22" height="20" viewBox="0 0 22 20"><path d="M4 10.5L8.5 16L18.5 3" fill="none" stroke="#404040" stroke-width="3"/></svg><svg style="left:199px;top:898px" width="14" height="16" viewBox="0 0 14 16"><rect x="0.5" y="0.5" width="12" height="15" fill="#f4f4f4" stroke="#c6c6c6"/><path d="M3 4H10M3 6.5H10M4 9H9M5 11.5H8" stroke="#777" stroke-width="1.1"/></svg><div class="t" style="left:220px;top:902px;color:#000;">lines</div><div class="cb" style="left:134px;top:949px"></div><svg style="left:136px;top:951px" width="22" height="20" viewBox="0 0 22 20"><path d="M4 10.5L8.5 16L18.5 3" fill="none" stroke="#404040" stroke-width="3"/></svg><svg style="left:164px;top:940px" width="18" height="18" viewBox="0 0 18 18"><rect width="18" height="17" fill="#a8e01c"/><path d="M0 0H12C9 3 5 4 0 9Z" fill="#22a8e8"/><path d="M0 9C5 5 9 4 12 1L14 2C10 7 6 8 0 13Z" fill="#28d0a0"/><path d="M8 17C10 12 12 8 12 3L14 1H18V17Z" fill="#f4e020"/><path d="M13 17C15 11 15 6 14 2L18 1V17Z" fill="#f07a1c"/><path d="M16 17C17 11 17 6 16.5 2" stroke="#d02020" stroke-width="1.2" fill="none"/><path d="M1 11C5 8 9 7 12 2M5 16C8 12 11 10 13 4M10 16C12 13 13 10 14 6" fill="none" stroke="#1a1a1a" stroke-width="0.9"/><rect x="0.5" y="0.5" width="17" height="16" fill="none" stroke="#8a8a8a"/></svg><div class="t" style="left:188px;top:946px;color:#000;">Contours and Spotsoundings</div><div class="cb" style="left:134px;top:993px"></div><svg style="left:136px;top:995px" width="22" height="20" viewBox="0 0 22 20"><path d="M4 10.5L8.5 16L18.5 3" fill="none" stroke="#404040" stroke-width="3"/></svg><svg style="left:164px;top:984px" width="18" height="18" viewBox="0 0 18 18"><rect width="18" height="16" fill="#9ccdf2"/><path d="M0 7C4 12.5 14 12.5 18 7V16H0Z" fill="#e8212b"/></svg><div class="t" style="left:188px;top:990px;color:#000;">Designs</div><div class="cb" style="left:134px;top:1037px"></div><svg style="left:136px;top:1039px" width="22" height="20" viewBox="0 0 22 20"><path d="M4 10.5L8.5 16L18.5 3" fill="none" stroke="#404040" stroke-width="3"/></svg><svg style="left:164px;top:1028px" width="18" height="18" viewBox="0 0 18 18" fill="none" stroke="#2a63c4" stroke-width="1.1"><circle cx="9" cy="9" r="7.5" fill="#cfe2fa" stroke-dasharray="2 1"/><ellipse cx="9" cy="9" rx="3.5" ry="7.5"/><path d="M1.5 9H16.5M3 5H15M3 13H15M9 1.5V16.5"/></svg><div class="t" style="left:188px;top:1034px;color:#000;">Vertical models</div></div>
</div>
<div class="a" style="left:476px;top:808px;width:100px;height:44px;background:#d9f1fc"></div>
<div class="t c" style="left:511px;top:814px;color:#000;font-weight:bold">1</div><div class="t c" style="left:561px;top:814px;color:#000;font-weight:bold">1</div>
<div class="t c" style="left:512px;top:902px;color:#000">1</div><div class="t c" style="left:562px;top:902px;color:#000">1</div>
<svg style="left:45px;top:820px" width="10" height="18" viewBox="0 0 10 18"><path d="M0.5 0.5V17.5L9.500000000000002 9Z" fill="#6b6f77"/></svg>
<!-- MAP PANEL -->
<div class="a" style="left:645px;top:352px;width:350px;height:57px;border:2px solid #a9aeb6;border-bottom:none;background:#e9ecef"></div>
<div class="t" style="left:667px;top:365px;color:#6b727c">Chapter 07 - Brest wrecks</div>
<svg style="left:1839px;top:375px" width="16" height="9" viewBox="0 0 16 9"><path d="M0 0.5H16L8 8.5Z" fill="#1f4ea0"/></svg>
<div class="a" style="left:639px;top:406px;width:1241px;height:659px;border:2px solid #a4a9b1;background:#9dbbf3;overflow:hidden">
<svg style="left:-2px;top:-2px" width="1241" height="659" viewBox="639 406 1241 659">
<polygon points="1880,698 1421,1063 1880,1063" fill="#d6c288"/>
<line x1="1880" y1="700" x2="1421" y2="1063" stroke="#6b6b6b" stroke-width="3.2"/>
<polygon points="1245,600 1476,661 1293,872 1045,783" fill="#4f60fa" stroke="#0a14ff" stroke-width="1.6"/>
<line x1="836" y1="597" x2="1181" y2="663.4" stroke="#ff1010" stroke-width="1.8"/>
<line x1="1430" y1="711.4" x2="1880" y2="798" stroke="#ff1010" stroke-width="1.8"/>
<line x1="1181" y1="663.4" x2="1430" y2="711.4" stroke="#b04a8c" stroke-width="1.5"/>
<g stroke="#1a1a1a" stroke-width="1.4">
<path d="M976 411H1010M993 408V428M1364 411H1398M1381 408V428M1752 411H1786M1769 408V428"/>
<path d="M976 798.5H1010M993 782V815M1364 798.5H1398M1381 782V815M1752 798.5H1786M1769 782V815"/>
</g>
<polygon points="723,474 706,522 723,509" fill="#fff" stroke="#333" stroke-width="0.8"/>
<polygon points="723,474 740,522 723,509" fill="#0a0a0a"/>
<text x="723" y="471" text-anchor="middle" font-family="Liberation Sans,sans-serif" font-size="20" fill="#2a2f3a">N</text>
<text transform="translate(837,588) rotate(11)" font-family="Liberation Sans,sans-serif" font-style="italic" font-size="31" fill="#ff1010">new</text>
<text x="1234" y="724.5" font-family="Liberation Sans,sans-serif" font-size="31" fill="#0a14ff">new</text>
<text x="663" y="788" font-family="Liberation Serif,serif" font-size="32.2" fill="#0a0a0a">N 5361200</text>
<text transform="translate(1002,916) rotate(90)" font-family="Liberation Serif,serif" font-size="32.2" fill="#0a0a0a">E 397800</text>
<text transform="translate(1390,916) rotate(90)" font-family="Liberation Serif,serif" font-size="32.2" fill="#0a0a0a">E 398000</text>
<text transform="translate(1778,916) rotate(90)" font-family="Liberation Serif,serif" font-size="32.2" fill="#0a0a0a">E 398200</text>
</svg>
</div>
<!-- CURSOR INFORMATION -->
<div class="a" style="left:1891px;top:354px;width:561px;height:709px;border:2px solid #a9aeb6;border-radius:3px;background:#e9ecef"></div>
<div class="t" style="left:1901px;top:364px;color:#6b727c">Cursor information</div>
<svg style="left:2385px;top:370px" width="16" height="20" viewBox="0 0 16 20"><path d="M4 1.5H12V9.5H4ZM1 9.5H15M8 9.5V19" fill="none" stroke="#4a4d55" stroke-width="2"/><path d="M10.5 2V9" stroke="#4a4d55" stroke-width="2.5"/></svg>
<svg style="left:2422px;top:372px" width="20" height="16" viewBox="0 0 20 16"><path d="M1.5 1.5H6.5L10 5.5L13.5 1.5H18.5L12.5 8L18.5 14.5H13.5L10 10.5L6.5 14.5H1.5L7.5 8Z" fill="#5c5f68"/></svg>
<div class="a" style="left:1897px;top:405px;width:542px;height:525px;background:#fff;border:2px solid #a9aeb6;box-shadow:3px 3px 3px rgba(120,125,135,.35)"></div>
<div class="a" style="left:1899px;top:407px;width:538px;height:521px;border:2px solid #b9bec6;border-right:3px double #b9bec6;background:#fff"></div>
<div class="a" style="left:1901px;top:409px;width:30px;height:397px;background:#f5f6f8"></div>
<div class="a" style="left:1901px;top:409px;width:533px;height:40px;background:#f5f6f8"></div>
<div class="a" style="left:1931px;top:448px;width:503px;height:2px;background:#d3d7dd"></div>
<div class="t" style="left:1938px;top:412px;color:#303236;letter-spacing:0.22px">WGS 84 / UTM zone 30N</div>
<svg style="left:2402px;top:423px" width="16" height="10" viewBox="0 0 16 10"><path d="M1.5 8.5L8 2L14.5 8.5" fill="none" stroke="#5a5e66" stroke-width="3"/></svg>
<div class="a" style="left:1901px;top:538px;width:533px;height:44px;background:#f5f6f8"></div>
<div class="a" style="left:1931px;top:581px;width:503px;height:2px;background:#d3d7dd"></div>
<div class="t" style="left:1938px;top:543px;color:#303236;letter-spacing:0.12px">WGS 84 (Project Datum)</div>
<svg style="left:2402px;top:554px" width="16" height="10" viewBox="0 0 16 10"><path d="M1.5 8.5L8 2L14.5 8.5" fill="none" stroke="#5a5e66" stroke-width="3"/></svg>
<div class="a" style="left:1901px;top:673px;width:533px;height:44px;background:#f5f6f8"></div>
<div class="a" style="left:1931px;top:716px;width:503px;height:2px;background:#d3d7dd"></div>
<div class="t" style="left:1938px;top:678px;color:#303236">RGF93 v1 (Source Datum)</div>
<svg style="left:2402px;top:689px" width="16" height="10" viewBox="0 0 16 10"><path d="M1.5 8.5L8 2L14.5 8.5" fill="none" stroke="#5a5e66" stroke-width="3"/></svg>
<div class="a" style="left:1931px;top:491px;width:503px;height:2px;background:#d3d7dd"></div>
<div class="a" style="left:1998px;top:491px;width:3px;height:3px;background:#fff"></div>
<div class="t" style="left:1968px;top:453px;color:#303236">...</div>
<div class="t r" style="left:2427px;top:453px;color:#000">397823.88</div>
<div class="a" style="left:1901px;top:535px;width:533px;height:2px;background:#d3d7dd"></div>
<div class="a" style="left:1998px;top:535px;width:3px;height:3px;background:#fff"></div>
<div class="t" style="left:1968px;top:497px;color:#303236">...</div>
<div class="t r" style="left:2427px;top:497px;color:#000">5361390.38</div>
<div class="a" style="left:1931px;top:625px;width:503px;height:2px;background:#d3d7dd"></div>
<div class="a" style="left:1998px;top:625px;width:3px;height:3px;background:#fff"></div>
<div class="t" style="left:1968px;top:587px;color:#303236">...</div>
<div class="t r" style="left:2427px;top:587px;color:#000;letter-spacing:0.23px">48;23;50.601N</div>
<div class="a" style="left:1901px;top:670px;width:533px;height:2px;background:#d3d7dd"></div>
<div class="a" style="left:1998px;top:670px;width:3px;height:3px;background:#fff"></div>
<div class="t" style="left:1968px;top:631px;color:#303236">...</div>
<div class="t r" style="left:2427px;top:631px;color:#000;letter-spacing:0.23px">004;22;49.388W</div>
<div class="a" style="left:1931px;top:760px;width:503px;height:2px;background:#d3d7dd"></div>
<div class="a" style="left:1998px;top:760px;width:3px;height:3px;background:#fff"></div>
<div class="t" style="left:1968px;top:722px;color:#303236">...</div>
<div class="t r" style="left:2427px;top:722px;color:#000;letter-spacing:0.23px">48;23;50.601N</div>
<div class="a" style="left:1901px;top:804px;width:533px;height:2px;background:#d3d7dd"></div>
<div class="a" style="left:1998px;top:804px;width:3px;height:3px;background:#fff"></div>
<div class="t" style="left:1968px;top:766px;color:#303236">...</div>
<div class="t r" style="left:2427px;top:766px;color:#000;letter-spacing:0.23px">004;22;49.388W</div>
<div class="a" style="left:1897px;top:932px;width:545px;height:64px;background:#e9ecef"></div>
<div class="a" style="left:2040px;top:931px;width:87px;height:59px;background:linear-gradient(#cfd3da,#d9dce2 50%,#d3d7dd);border:2px solid #a9aeb6;border-top:none"></div>
<div class="t c" style="left:2083px;top:945px;color:#3a3c42">ENC</div>
<div class="a" style="left:2128px;top:931px;width:108px;height:59px;background:linear-gradient(#cfd3da,#d9dce2 50%,#d3d7dd);border:2px solid #a9aeb6;border-top:none"></div>
<div class="t c" style="left:2182px;top:945px;color:#3a3c42">Photo</div>
<div class="a" style="left:2237px;top:931px;width:170px;height:59px;background:linear-gradient(#cfd3da,#d9dce2 50%,#d3d7dd);border:2px solid #a9aeb6;border-top:none"></div>
<div class="t c" style="left:2322px;top:945px;color:#3a3c42">Target info</div>
<div class="a" style="left:1903px;top:928px;width:137px;height:66px;background:#fff;border:2px solid #a9aeb6;border-top:none"></div>
<div class="t c" style="left:1971px;top:947px;color:#2c2c2e">Position</div>
<div class="a" style="left:1897px;top:997px;width:551px;height:56px;background:linear-gradient(#d4d8df,#dfe2e7 60%,#d6dae0)"></div>
<div class="a" style="left:1900px;top:995px;width:320px;height:56px;background:#e9ecef;border:2px solid #a9aeb6;border-top:none"></div>
<div class="a" style="left:2218px;top:997px;width:230px;height:2px;background:#b9bec6"></div>
<svg style="left:1928px;top:1004px" width="36" height="40" viewBox="0 0 36 40"><circle cx="20" cy="14" r="12.500000000000002" fill="#2b9be8" stroke="#b8bcc2" stroke-width="1.5"/><text x="20" y="22" text-anchor="middle" font-family="Liberation Sans,sans-serif" font-weight="bold" font-size="21" fill="#fff">?</text><path d="M2 21L5.5 36L9.500000000000002 32L13 37L16 34.5L12.5 30L17 28Z" fill="#fff" stroke="#777" stroke-width="1.3"/></svg>
<div class="t" style="left:1968px;top:1006px;color:#303236">Cursor information</div>
<svg style="left:2251px;top:1006px" width="28" height="34" viewBox="0 0 28 34"><rect x="0.5" y="0.5" width="27" height="33" fill="#b9b4e8" stroke="#a3a6b2"/><path d="M4 8H12M4 16H12M4 24H12" stroke="#55585f" stroke-width="1.6"/><rect x="14" y="10" width="11" height="4" fill="#fff"/><rect x="14" y="22" width="11" height="4" fill="#fff"/></svg>
<div class="t" style="left:2288px;top:1006px;color:#303236">Properties</div>
<!-- OUTPUT PANEL -->
<div class="a" style="left:25px;top:1076px;width:2427px;height:316px;border:2px solid #a9aeb6;border-radius:3px;background:#e9ecef"></div>
<div class="t" style="left:34px;top:1086px;color:#6b727c">Output</div>
<svg style="left:2385px;top:1091px" width="16" height="20" viewBox="0 0 16 20"><path d="M4 1.5H12V9.5H4ZM1 9.5H15M8 9.5V19" fill="none" stroke="#4a4d55" stroke-width="2"/><path d="M10.5 2V9" stroke="#4a4d55" stroke-width="2.5"/></svg>
<svg style="left:2422px;top:1094px" width="20" height="16" viewBox="0 0 20 16"><path d="M1.5 1.5H6.5L10 5.5L13.5 1.5H18.5L12.5 8L18.5 14.5H13.5L10 10.5L6.5 14.5H1.5L7.5 8Z" fill="#5c5f68"/></svg>
<div class="a" style="left:30px;top:1127px;width:2418px;height:195px;background:#fff;border:2px solid #a9aeb6;overflow:hidden">
<div class="a" style="left:0px;top:0px;width:2414px;height:47px;background:linear-gradient(#f7f8fa,#eef0f3)"></div>
<div class="a" style="left:0px;top:47px;width:2414px;height:2px;background:#a9aeb6"></div>
<div class="a" style="left:0px;top:49px;width:34px;height:150px;background:#f5f6f8"></div>
<div class="a" style="left:35px;top:49px;width:2337px;height:44px;background:#ebecee"></div>
<div class="a" style="left:35px;top:93px;width:2337px;height:2px;background:#d3d7dd"></div>
<div class="a" style="left:0px;top:93px;width:34px;height:2px;background:#a9aeb6"></div>
<div class="a" style="left:35px;top:139px;width:2337px;height:2px;background:#d3d7dd"></div>
<div class="a" style="left:0px;top:139px;width:34px;height:2px;background:#a9aeb6"></div>
<div class="a" style="left:35px;top:185px;width:2337px;height:2px;background:#d3d7dd"></div>
<div class="a" style="left:0px;top:185px;width:34px;height:2px;background:#a9aeb6"></div>
<div class="a" style="left:34px;top:0px;width:2px;height:200px;background:#a9aeb6"></div>
<div class="a" style="left:114px;top:0px;width:2px;height:47px;background:#a9aeb6"></div>
<div class="a" style="left:114px;top:49px;width:2px;height:150px;background:#d3d7dd"></div>
<div class="a" style="left:353px;top:0px;width:2px;height:47px;background:#a9aeb6"></div>
<div class="a" style="left:353px;top:49px;width:2px;height:150px;background:#d3d7dd"></div>
<div class="a" style="left:1417px;top:0px;width:2px;height:47px;background:#a9aeb6"></div>
<div class="a" style="left:1417px;top:49px;width:2px;height:150px;background:#d3d7dd"></div>
<div class="a" style="left:2370px;top:0px;width:2px;height:47px;background:#a9aeb6"></div>
<div class="a" style="left:2371px;top:49px;width:43px;height:142px;background:linear-gradient(90deg,#f3f4f6,#fdfdfe)"></div>
</div>
<div class="t" style="left:158px;top:1135px;color:#3a3c42">Time</div>
<div class="t" style="left:398px;top:1135px;color:#3a3c42">Description</div>
<div class="t" style="left:1462px;top:1135px;color:#3a3c42">Message</div>
<div class="t" style="left:155px;top:1183px;color:#000;letter-spacing:0.38px">01:13:46 PM</div>
<div class="t" style="left:395px;top:1183px;color:#000;letter-spacing:-0.09px">Squire is running version 0.6.129.102</div>
<svg style="left:70px;top:1180px" width="16" height="16" viewBox="0 0 16 16"><circle cx="8" cy="7" r="6" fill="#eef3fb" stroke="#9aa3b3" stroke-width="1"/><path d="M9 12.5L11.5 15.500000000000002" stroke="#9aa3b3" stroke-width="1.2"/><text x="8" y="10.5" text-anchor="middle" font-family="Liberation Serif,serif" font-weight="bold" font-size="10" fill="#1c55c8">i</text></svg>
<div class="t" style="left:155px;top:1229px;color:#000;letter-spacing:0.38px">01:13:46 PM</div>
<div class="t" style="left:395px;top:1229px;color:#000">Loading project</div>
<div class="t" style="left:1459px;top:1229px;color:#000;letter-spacing:0.15px">D:\Projects\Chapter 07 - Brest wrecks</div>
<svg style="left:70px;top:1226px" width="16" height="16" viewBox="0 0 16 16"><circle cx="8" cy="7" r="6" fill="#eef3fb" stroke="#9aa3b3" stroke-width="1"/><path d="M9 12.5L11.5 15.500000000000002" stroke="#9aa3b3" stroke-width="1.2"/><text x="8" y="10.5" text-anchor="middle" font-family="Liberation Serif,serif" font-weight="bold" font-size="10" fill="#1c55c8">i</text></svg>
<div class="t" style="left:155px;top:1275px;color:#000;letter-spacing:0.38px">01:13:47 PM</div>
<div class="t" style="left:395px;top:1275px;color:#000;letter-spacing:-0.08px">Found 48 Processing Applications</div>
<div class="t" style="left:1459px;top:1275px;color:#000;letter-spacing:-0.19px">Double click to show an overview</div>
<svg style="left:70px;top:1272px" width="16" height="16" viewBox="0 0 16 16"><circle cx="8" cy="7" r="6" fill="#eef3fb" stroke="#9aa3b3" stroke-width="1"/><path d="M9 12.5L11.5 15.500000000000002" stroke="#9aa3b3" stroke-width="1.2"/><text x="8" y="10.5" text-anchor="middle" font-family="Liberation Serif,serif" font-weight="bold" font-size="10" fill="#1c55c8">i</text></svg>
<svg style="left:45px;top:1191px" width="10" height="18" viewBox="0 0 10 18"><path d="M0.5 0.5V17.5L9.500000000000002 9Z" fill="#6b6f77"/></svg>
<svg style="left:2413px;top:1195px" width="18" height="10" viewBox="0 0 18 10"><path d="M0 9.500000000000002H18L9 0.5Z" fill="#5a5e66"/></svg>
<svg style="left:2413px;top:1292px" width="18" height="10" viewBox="0 0 18 10"><path d="M0 0.5H18L9 9.500000000000002Z" fill="#5a5e66"/></svg>
<div class="a" style="left:2405px;top:1222px;width:38px;height:42px;border:1.5px solid #b9bdc5;border-radius:4px;background:linear-gradient(90deg,#e9ebee,#f7f8fa 50%,#eceef1)"></div>
<svg style="left:2415px;top:1236px" width="16" height="14" viewBox="0 0 16 14"><path d="M0 1H16M0 5H16M0 9H16M0 13H16" stroke="#5a5e66" stroke-width="1.6"/></svg>
<div class="a" style="left:30px;top:1325px;width:2418px;height:61px;background:linear-gradient(#cdd3dc,#d6dae1 40%,#e3e6ea 100%);border-top:2px solid #a5aab2"></div>
<div class="a" style="left:33px;top:1323px;width:179px;height:55px;background:#e9ecef;border:2px solid #a9aeb6;border-top:none"></div>
<svg style="left:64px;top:1335px" width="28" height="32" viewBox="0 0 28 32"><rect x="1" y="1" width="25" height="29" fill="#f4f4f4" stroke="#a7a9ad" stroke-width="1.4"/><path d="M5 7H22M5 12H16M5 17H20M5 22H14" stroke="#3c3c3c" stroke-width="1.8"/></svg>
<div class="t" style="left:102px;top:1335px;color:#303236">Output</div>
<svg style="left:241px;top:1337px" width="32" height="30" viewBox="0 0 32 30"><path d="M1 1V28H31" fill="none" stroke="#b5b8be" stroke-width="1"/><path d="M1 22L8 13L15.500000000000002 19L24 9L30 13V28H1Z" fill="#1f8fe0"/><path d="M1 20L8 11L15.500000000000002 17L24 6L30 11" fill="none" stroke="#6cc04a" stroke-width="2"/></svg>
<div class="t" style="left:281px;top:1335px;color:#303236">Profile view</div>
<!-- STATUS BAR -->
<div class="a" style="left:14px;top:1394px;width:2455px;height:3px;background:#8a8f97"></div>
<div class="a" style="left:14px;top:1397px;width:2449px;height:65px;background:linear-gradient(#e9ebee 0,#e1e3e7 30%,#cfd2d7 60%,#c5c8cd 88%,#cdd0d5 100%);border-left:2px solid #848991;border-right:2px solid #848991;border-bottom:2px solid #848991;border-top:2px solid #f1f2f4"></div>
<div class="a" style="left:1372px;top:1408px;width:3px;height:44px;background:linear-gradient(90deg,#b4b8c0 0 1px,#f4f5f7 1px 3px)"></div>
<div class="t" style="left:1395px;top:1411px;color:#3a3c42;letter-spacing:0.06px">Level 0 - Cell size 0.00 x 0.00; 397823.881 E; 5361390.383 N; 'WGS 84'; Mean; NaN</div>
<svg style="left:2431px;top:1428px" width="22" height="22" viewBox="0 0 22 22" fill="#9a9ea6"><rect x="16" y="1" width="4" height="4"/><rect x="9" y="8" width="4" height="4"/><rect x="16" y="8" width="4" height="4"/><rect x="2" y="15.500000000000002" width="4" height="4"/><rect x="9" y="15.500000000000002" width="4" height="4"/><rect x="16" y="15.500000000000002" width="4" height="4"/></svg>
<div class="a" style="left:0;top:1474px;width:2477px;height:2px;background:#8c9198"></div>
<div class="a" style="left:0;top:1465px;width:11px;height:11px;background:#1b2c4e;clip-path:polygon(0 0,0 100%,100% 100%)"></div>
<div class="a" style="left:2465px;top:1464px;width:12px;height:12px;background:#16213a;clip-path:polygon(100% 0,0 100%,100% 100%)"></div>
<div class="a" style="left:0;top:0;width:7px;height:9px;background:#1d4fb0;clip-path:polygon(0 0,100% 0,0 100%)"></div>
<div class="a" style="left:2467px;top:0;width:10px;height:10px;background:#f59a23;clip-path:polygon(0 0,100% 0,100% 100%)"></div>
<!-- MOUSE CURSOR -->
<svg style="left:56px;top:64px" width="48" height="52" viewBox="0 0 48 52"><path d="M1.5 2.5V40L11 31.5L18 47.5L25.500000000000004 44.5L18.5 29H31Z" fill="#fff" stroke="#111" stroke-width="1.4" stroke-linejoin="miter"/></svg>
</body></html>
